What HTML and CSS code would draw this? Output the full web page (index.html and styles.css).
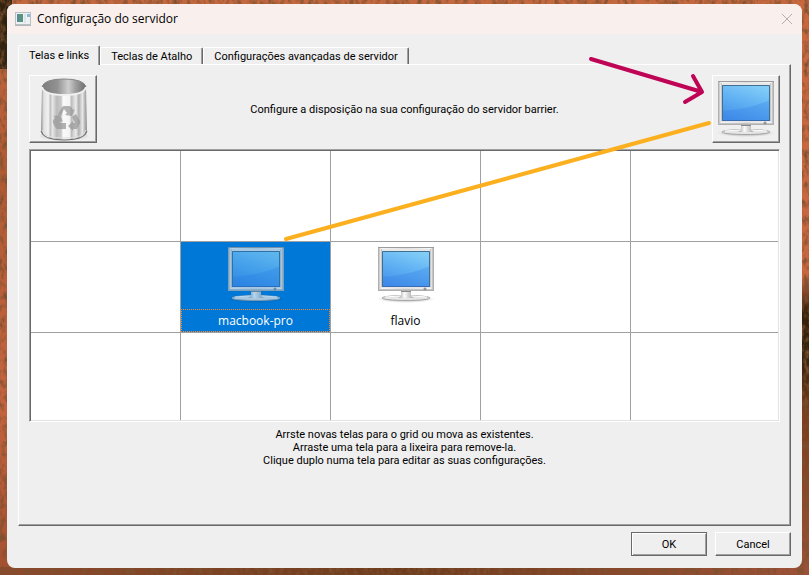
FILE: index.html
```html
<!DOCTYPE html>
<html lang="pt-BR">
<head>
<meta charset="utf-8">
<title>Configuração do servidor</title>
<link rel="stylesheet" href="styles.css">
</head>
<body>
<svg class="wallpaper" aria-hidden="true">
  <filter id="rock" x="0" y="0" width="100%" height="100%">
    <feTurbulence type="fractalNoise" baseFrequency="0.22 0.12" numOctaves="4" seed="7"/>
    <feColorMatrix values="0 0 0 0 0.2  0 0 0 0 0.08  0 0 0 0 0.03  2.4 0 0 0 -1"/>
  </filter>
  <rect width="100%" height="100%" filter="url(#rock)"/>
</svg>

<svg class="defs" aria-hidden="true">
  <defs>
    <linearGradient id="screen" x1="0.7" y1="0" x2="0.3" y2="1"><stop offset="0" stop-color="#82cdf7"/><stop offset="0.5" stop-color="#5fb0f3"/><stop offset="1" stop-color="#4590ea"/></linearGradient>
    <linearGradient id="bezel" x1="0" y1="0" x2="1" y2="0"><stop offset="0" stop-color="#b4b4b4"/><stop offset="0.05" stop-color="#f6f6f6"/><stop offset="0.5" stop-color="#dedede"/><stop offset="0.95" stop-color="#f8f8f8"/><stop offset="1" stop-color="#a8a8a8"/></linearGradient>
    <linearGradient id="stem" x1="0" y1="0" x2="1" y2="0"><stop offset="0" stop-color="#9c9c9c"/><stop offset="0.4" stop-color="#fafafa"/><stop offset="1" stop-color="#a4a4a4"/></linearGradient>
    <radialGradient id="shade"><stop offset="0" stop-color="#000" stop-opacity="0.35"/><stop offset="1" stop-color="#000" stop-opacity="0"/></radialGradient>
    <linearGradient id="can" x1="0" y1="0" x2="1" y2="0">
      <stop offset="0" stop-color="#8c8c8c"/><stop offset="0.06" stop-color="#e0e0e0"/><stop offset="0.16" stop-color="#f2f2f2"/><stop offset="0.2" stop-color="#c0c0c0"/><stop offset="0.25" stop-color="#e6e6e6"/><stop offset="0.34" stop-color="#bcbcbc"/><stop offset="0.44" stop-color="#cacaca"/><stop offset="0.48" stop-color="#fafafa"/><stop offset="0.62" stop-color="#f4f4f4"/><stop offset="0.66" stop-color="#bebebe"/><stop offset="0.76" stop-color="#ececec"/><stop offset="0.82" stop-color="#b0b0b0"/><stop offset="0.9" stop-color="#e8e8e8"/><stop offset="1" stop-color="#8a8a8a"/>
    </linearGradient>
    <linearGradient id="hollow" x1="0" y1="0" x2="1" y2="0"><stop offset="0" stop-color="#7c7c7c"/><stop offset="0.35" stop-color="#929292"/><stop offset="0.6" stop-color="#cecece"/><stop offset="0.75" stop-color="#a2a2a2"/><stop offset="1" stop-color="#6c6c6c"/></linearGradient>
    <symbol id="monitor" viewBox="0 0 58 58">
      <ellipse cx="29" cy="53" rx="29" ry="4" fill="url(#shade)"/>
      <ellipse cx="29" cy="52" rx="24" ry="2.500" fill="#e6e6e6" stroke="#a4a4a4"/>
      <path d="M8 51q21-3 42 0" fill="none" stroke="#fff"/>
      <path d="M24 44h10v5q0 2 3 3H21q3-1 3-3z" fill="url(#stem)"/>
      <path d="M24 45.500h10" stroke="#8c8c8c"/>
      <rect x="1.500" y="1.500" width="55" height="43" fill="url(#bezel)" stroke="#b0b0b0"/>
      <path d="M1 1.500h56" stroke="#9c9c9c"/>
      <path d="M2 43.500h54" stroke="#c4c4c4"/>
      <rect x="4" y="3" width="50" height="39" fill="#e8e8e8"/>
      <path d="M4.500 3v38M53.500 3v38" stroke="#c8c8c8"/>
      <rect x="5" y="5" width="48" height="36" fill="url(#screen)"/>
      <path d="M5 31Q34 29 53 20v21H5z" fill="#2a76e4" opacity="0.25"/>
      <path d="M5.500 41V5.500H52.500V41" fill="none" stroke="#416f92"/>
      <path d="M5 40.500h48" stroke="#3a6cb4"/>
      <circle cx="48" cy="43" r="1" fill="#eee" stroke="#777"/>
    </symbol>
  </defs>
</svg>

<main class="dialog">
  <header class="titlebar">
    <svg class="app-icon" viewBox="0 0 16 14" aria-hidden="true">
      <rect x="0.500" y="0.500" width="15" height="12" fill="#eef1f3" stroke="#b9c0c4"/>
      <rect x="2" y="2" width="6" height="8" fill="#57957f"/>
      <path d="M2 2h2v8H2z" fill="#5b8698"/>
      <path d="M9 2h2v9H9z" fill="#dfe4e6"/>
      <path d="M12 2h3v3h-3z" fill="#8fb7d8"/>
      <path d="M0 13.500h16" stroke="#b0b7ba"/>
    </svg>
    <h1 class="title">Configuração do servidor</h1>
    <button class="close" type="button" aria-label="Fechar"><svg viewBox="0 0 12 12"><path d="M1 1l10 10M11 1L1 11" stroke="#b5afad" fill="none"/></svg></button>
  </header>

  <div class="content">
    <div class="tabs" role="tablist">
      <button class="tab active" type="button" role="tab" aria-selected="true">Telas e links</button>
      <button class="tab" type="button" role="tab" aria-selected="false">Teclas de Atalho</button>
      <button class="tab" type="button" role="tab" aria-selected="false">Configurações avançadas de servidor</button>
    </div>

    <section class="pane" role="tabpanel">
      <div class="toolbar">
        <button class="tool" type="button" aria-label="Lixeira">
          <svg viewBox="0 0 64 64">
            <ellipse cx="33" cy="59" rx="26" ry="5" fill="url(#shade)"/>
            <path d="M11 11L10 55Q12 63 33 63T56 55L55 11z" fill="url(#can)"/>
            <path d="M10 54Q12 63 33 63T56 54" fill="none" stroke="#6a6a6a"/>
            <path d="M11 53Q13 61 33 61T55 53" fill="none" stroke="#ddd"/>
            <ellipse cx="33" cy="10" rx="22" ry="8" fill="url(#hollow)"/>
            <path d="M11 10Q13 18 33 18T55 10" fill="none" stroke="#f0f0f0" stroke-width="2"/>
            <path d="M11 10Q13 2 33 2T55 10" fill="none" stroke="#868686"/>
            <g fill="#9a9a9a" opacity="0.75">
              <path d="M27 37l4-7q1-1 3-1h4q2 0 3 2l1 2 2-1-3 7-7-1 2-2-3-4-3 7z"/>
              <path d="M45 37l4 7q1 2-1 4l-2 4h-4v2l-5-5 5-5v2h2l-3-6z"/>
              <path d="M35 46v6h-8q-2 0-3-2l-2-4q-1-2 1-4l1-2-2-1 7-1 3 7-2-1-1 2z"/>
            </g>
          </svg>
        </button>
        <p class="hint">Configure a disposição na sua configuração do servidor barrier.</p>
        <button class="tool" type="button" aria-label="Nova tela"><svg class="monitor"><use href="#monitor"/></svg></button>
      </div>

      <div class="grid-frame">
        <table class="screens" aria-label="Telas">
          <tbody>
            <tr><td></td><td></td><td></td><td></td><td></td></tr>
            <tr>
              <td></td>
              <td class="selected"><div class="screen"><svg class="monitor"><use href="#monitor"/></svg><span class="name">macbook-pro</span></div></td>
              <td><div class="screen"><svg class="monitor"><use href="#monitor"/></svg><span class="name">flavio</span></div></td>
              <td></td><td></td>
            </tr>
            <tr><td></td><td></td><td></td><td></td><td></td></tr>
          </tbody>
        </table>
      </div>

      <p class="help">Arrste novas telas para o grid ou mova as existentes.<br>Arraste uma tela para a lixeira para remove-la.<br>Clique duplo numa tela para editar as suas configurações.</p>
    </section>

    <footer class="actions">
      <button class="action default" type="button">OK</button>
      <button class="action" type="button">Cancel</button>
    </footer>
  </div>
</main>

<svg class="annotations" viewBox="0 0 809 575" aria-hidden="true">
  <g fill="none" stroke-width="4" stroke-linecap="round" stroke-linejoin="round">
    <path d="M286 239L709 123" stroke="#fcb01f"/>
    <path d="M591 59L702 92M693 76L702 92L685 102" stroke="#bf0456"/>
  </g>
</svg>
</body>
</html>
```

FILE: styles.css
```css
* { box-sizing: border-box; }

body {
  position: relative;
  display: flex;
  min-height: 100vh;
  margin: 0;
  padding: 4px 7px 7px;
  background:
    linear-gradient(#2e200c, #33230f) 0 0 / 12px 12% no-repeat,
    linear-gradient(#c9683f 48%, #3a220b 54%, #33200c 62%, #7a3f1c 72%, #9c5238) 100% 0 / 12px 100% no-repeat,
    linear-gradient(90deg, #8c4a2c, #6e3c1c 50%, #a05238) 0 100% / 100% 8px no-repeat,
    linear-gradient(#c4683f, #b05a34 30%, #c4643f 70%, #a3502f);
  color: #000;
  font: 11px/13px Roboto, sans-serif;
}

h1, p { margin: 0; font-weight: 400; }

button {
  padding: 0;
  border: 0;
  background: none;
  color: inherit;
  font: inherit;
}

svg { display: block; }

.defs { position: absolute; width: 0; height: 0; }

.wallpaper {
  position: absolute;
  inset: 0;
  width: 100%;
  height: 100%;
}

.dialog {
  position: relative;
  display: flex;
  flex: 1;
  flex-direction: column;
  overflow: hidden;
  border-radius: 8px;
  background: #efefef;
}

.titlebar {
  display: flex;
  align-items: center;
  gap: 6px;
  height: 30px;
  padding: 0 9px 0 8px;
  background: #f9f0ed;
}

.app-icon { width: 16px; height: 14px; }

.title { flex: 1; font: 12px/16px "Open Sans", sans-serif; }

.close svg { width: 12px; height: 12px; }

.content {
  display: flex;
  flex: 1;
  flex-direction: column;
  padding: 11px 11px 12px;
}

.tabs { display: flex; align-items: flex-end; }

.tab,
.tool,
.pane,
.action {
  border: 1px solid #fff;
  border-right-color: #696969;
  border-bottom-color: #696969;
  box-shadow: inset -1px -1px #a0a0a0;
}

.tab {
  height: 17px;
  padding: 0 10px;
  border-bottom: 0;
  border-radius: 2px 2px 0 0;
  box-shadow: inset -1px 0 #a0a0a0;
}

.tab.active {
  position: relative;
  height: 20px;
  margin-bottom: -1px;
  background: #efefef;
}

.pane {
  display: flex;
  flex: 1;
  flex-direction: column;
  padding: 10px;
}

.toolbar {
  display: flex;
  align-items: center;
  justify-content: space-between;
  margin-bottom: 6px;
}

.hint { text-align: center; }

.tool {
  display: grid;
  place-items: center;
  width: 68px;
  height: 68px;
}

.tool svg { width: 64px; height: 64px; }
.tool .monitor,
.monitor { width: 58px; height: 58px; }

.grid-frame {
  overflow: hidden;
  padding: 1px;
  border: 1px solid #a0a0a0;
  border-right-color: #fff;
  border-bottom-color: #fff;
  background: #fff;
  box-shadow: inset 1px 1px #696969, inset -1px -1px #e3e3e3;
}

.screens {
  width: 100%;
  border-spacing: 0;
  table-layout: fixed;
}

.screens td {
  width: 150px;
  height: 91px;
  padding: 0;
  border-right: 1px solid #a0a0a0;
  border-bottom: 1px solid #a0a0a0;
}

.screens td:last-child { width: auto; border-right: 0; }
.screens tr:last-child td { height: 87px; border-bottom: 0; }

.screen {
  display: flex;
  flex-direction: column;
  align-items: center;
  justify-content: space-between;
  height: 90px;
  padding-top: 4px;
}

.name {
  align-self: stretch;
  border: 1px dotted transparent;
  font: 12px/21px "Open Sans", sans-serif;
  text-align: center;
}

.selected { background: #0078d7; color: #fff; }
.selected .name { border-color: #ff8728; }
.selected .monitor { opacity: 0.72; }

.help { margin-top: 6px; text-align: center; }

.actions {
  display: flex;
  justify-content: flex-end;
  gap: 8px;
  margin-top: 6px;
}

.action { width: 76px; height: 24px; }

.action.default {
  border-color: #696969;
  box-shadow: inset 1px 1px #fff, inset -1px -1px #a0a0a0;
}

.annotations {
  position: absolute;
  inset: 0;
  width: 100%;
  height: 100%;
  pointer-events: none;
}
```
